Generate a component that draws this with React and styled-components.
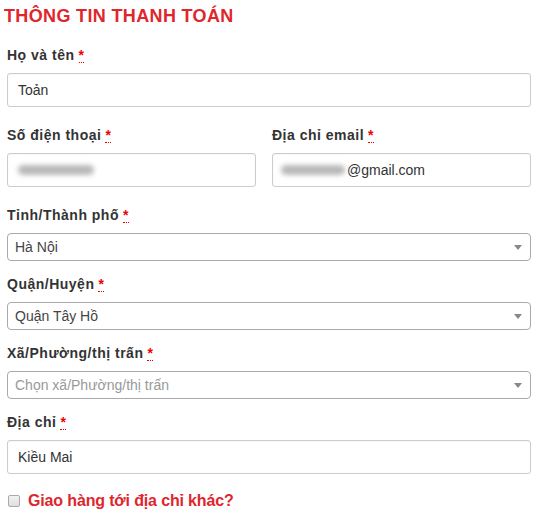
import React from "react";
import styled, { createGlobalStyle } from "styled-components";

const Global = createGlobalStyle`
  html, body { margin: 0; padding: 0; background: #fff; }
  body { font-family: "Liberation Sans", Arial, sans-serif; color: #333; }
  * { box-sizing: border-box; }
`;

const Page = styled.div`
  width: 543px;
  height: 512px;
  overflow: hidden;
  padding: 5px 12px 0 7px;
`;

const Title = styled.h3`
  margin: 0 0 0 -3px;
  font-size: 18px;
  line-height: 22px;
  font-weight: 700;
  color: #e0262d;
  letter-spacing: 0.35px;
`;

const Field = styled.div`
  display: flex;
  flex-direction: column;
  margin-top: ${(p) => p.$mt || 0}px;
`;

const Row = styled.div`
  display: grid;
  grid-template-columns: 249px 1fr;
  column-gap: 16px;
  margin-top: ${(p) => p.$mt || 0}px;
`;

const Label = styled.label`
  font-size: 14px;
  font-weight: 700;
  line-height: 18px;
  color: #333;
  letter-spacing: 0.5px;
  margin-bottom: 9px;
`;

const Req = styled.abbr`
  color: #e00;
  text-decoration: none;
  border-bottom: 1px dotted #e00;
  font-weight: 700;
  display: inline-block;
  line-height: 13px;
  margin-left: 4px;
`;

const Input = styled.div`
  height: 34px;
  border: 1px solid #ccc;
  border-radius: 3px;
  display: flex;
  align-items: center;
  padding: 0 ${(p) => p.$pl || 10}px;
  font-size: 14px;
  color: #333;
  box-shadow: inset 0 1px 2px rgba(0, 0, 0, 0.04);
`;

const Blur = styled.span`
  display: inline-block;
  width: ${(p) => p.$w}px;
  height: 10px;
  border-radius: 5px;
  background: #b8b8b8;
  filter: blur(2.5px);
  margin-right: 2px;
`;

const Select = styled.div`
  height: 28px;
  border: 1px solid #aaa;
  border-radius: 4px;
  display: flex;
  align-items: center;
  justify-content: space-between;
  padding: 0 8px 0 7px;
  font-size: 14px;
  color: ${(p) => (p.$placeholder ? "#999" : "#444")};
`;

const Arrow = styled.span`
  width: 0;
  height: 0;
  border-left: 4px solid transparent;
  border-right: 4px solid transparent;
  border-top: 5px solid #888;
`;

const CheckRow = styled.div`
  display: flex;
  align-items: center;
  height: 18px;
  margin-top: 18px;
  margin-left: 1px;
`;

const Box = styled.span`
  width: 12px;
  height: 12px;
  border: 1px solid #aaa;
  border-radius: 2px;
  background: linear-gradient(#f3f3f3, #dedede);
  margin-right: 8px;
`;

const CheckText = styled.span`
  font-size: 16px;
  line-height: 18px;
  font-weight: 700;
  color: #e0262d;
  letter-spacing: -0.15px;
`;

const L = ({ children }) => (
  <Label>
    {children}
    <Req title="bắt buộc">*</Req>
  </Label>
);

export default function App() {
  return (
    <>
      <Global />
      <Page>
        <Title>THÔNG TIN THANH TOÁN</Title>
        <Field $mt={19}>
          <L>Họ và tên</L>
          <Input>Toản</Input>
        </Field>
        <Row $mt={19}>
          <Field>
            <L>Số điện thoại</L>
            <Input>
              <Blur $w={76} />
            </Input>
          </Field>
          <Field>
            <L>Địa chỉ email</L>
            <Input $pl={8}>
              <Blur $w={64} />@gmail.com
            </Input>
          </Field>
        </Row>
        <Field $mt={19}>
          <L>Tỉnh/Thành phố</L>
          <Select>
            Hà Nội
            <Arrow />
          </Select>
        </Field>
        <Field $mt={14}>
          <L>Quận/Huyện</L>
          <Select>
            Quận Tây Hồ
            <Arrow />
          </Select>
        </Field>
        <Field $mt={14}>
          <L>Xã/Phường/thị trấn</L>
          <Select $placeholder>
            Chọn xã/Phường/thị trấn
            <Arrow />
          </Select>
        </Field>
        <Field $mt={14}>
          <L>Địa chỉ</L>
          <Input>Kiều Mai</Input>
        </Field>
        <CheckRow>
          <Box />
          <CheckText>Giao hàng tới địa chỉ khác?</CheckText>
        </CheckRow>
      </Page>
    </>
  );
}
